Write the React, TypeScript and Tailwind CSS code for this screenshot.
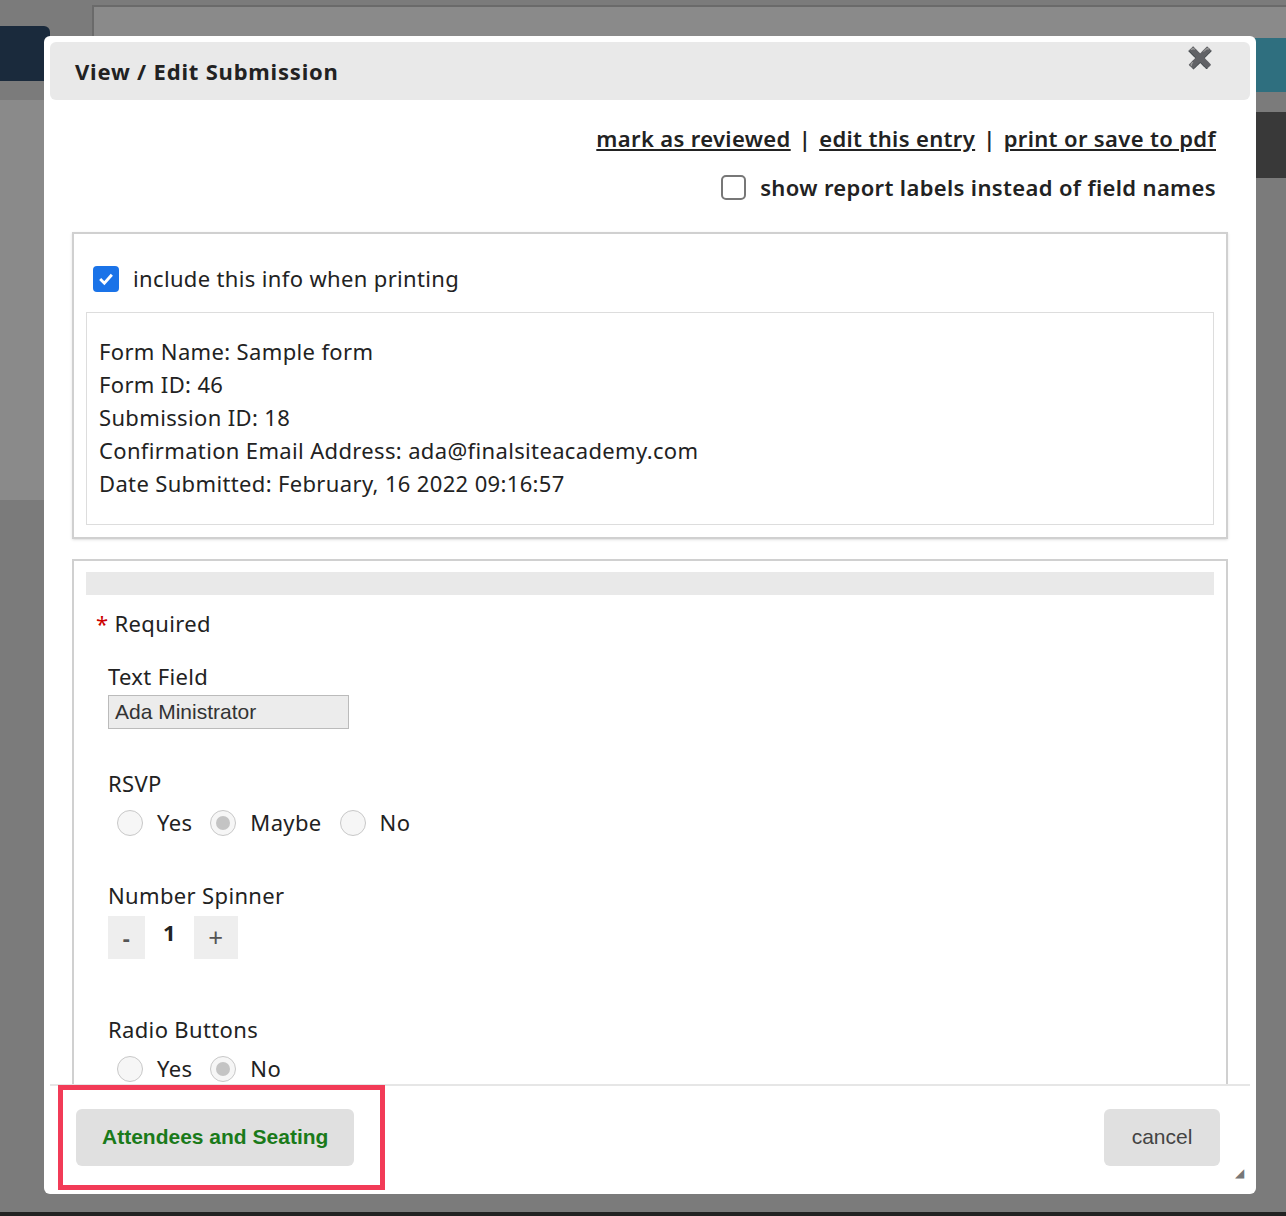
import React from "react";

function Radio({ checked }: { checked?: boolean }) {
  return (
    <span className="inline-flex h-[26px] w-[26px] items-center justify-center rounded-full border border-[#c8c8c8] bg-[#f6f6f6]">
      {checked && <span className="h-[14px] w-[14px] rounded-full bg-[#c4c4c4]" />}
    </span>
  );
}

export default function App() {
  return (
    <div className="relative h-[1216px] w-[1286px] overflow-hidden bg-[#7b7b7b] font-['Open_Sans',sans-serif] tracking-[0.35px] text-[#222]">
      {/* backdrop page */}
      <div className="absolute left-0 top-[26px] h-[55px] w-[50px] rounded-r-md bg-[#1a2a3c]" />
      <div className="absolute left-[92px] top-[5px] h-[40px] w-[1194px] border-l-2 border-t-2 border-[#6a6a6a] bg-[#8a8a8a]" />
      <div className="absolute right-0 top-[38px] h-[54px] w-[40px] rounded-l-md bg-[#2f6f7f]" />
      <div className="absolute right-0 top-[112px] h-[66px] w-[40px] bg-[#393939]" />
      <div className="absolute left-0 top-[100px] h-[400px] w-[44px] bg-[#8a8a8a]" />
      <div className="absolute bottom-0 left-0 h-[4px] w-full bg-[#222]" />

      {/* modal */}
      <div className="absolute left-[44px] top-[36px] flex h-[1158px] w-[1212px] flex-col rounded-md bg-white p-[6px]">
        <div className="relative flex h-[58px] items-center rounded-md bg-[#e9e9e9] px-[25px]">
          <span className="text-[22px] font-bold tracking-[0.8px]">View / Edit Submission</span>
          <span className="absolute right-[36px] top-[0px] text-[21px] font-bold text-[#888]">✖</span>
        </div>

        <div className="flex flex-1 flex-col overflow-hidden px-[22px]">
          <div className="mt-[22px] flex justify-end gap-[8px] pr-[12px] text-[22px] font-semibold">
            <span className="underline">mark as reviewed</span>|
            <span className="underline">edit this entry</span>|
            <span className="underline">print or save to pdf</span>
          </div>
          <div className="mt-[16px] flex items-center justify-end gap-[14px] pr-[12px] text-[22px] font-semibold">
            <span className="h-[25px] w-[25px] rounded-[5px] border-2 border-[#777]" />
            show report labels instead of field names
          </div>

          <div className="mt-[28px] border-2 border-[#d0d0d0] px-[12px] pb-[12px] shadow-sm">
            <div className="mt-[28px] flex items-center gap-[14px] pl-[7px] text-[22px]">
              <span className="flex h-[26px] w-[26px] items-center justify-center rounded-[4px] bg-[#1a73e8] text-white">
                <svg viewBox="0 0 24 24" className="h-[20px] w-[20px]" fill="none" stroke="white" strokeWidth="3.5"><path d="M5 12l5 5 9-10" /></svg>
              </span>
              include this info when printing
            </div>
            <div className="mt-[17px] border border-[#ddd] px-[12px] pb-[24px] pt-[22px] text-[22px] leading-[33px]">
              <div>Form Name: Sample form</div>
              <div>Form ID: 46</div>
              <div>Submission ID: 18</div>
              <div>Confirmation Email Address: ada@finalsiteacademy.com</div>
              <div>Date Submitted: February, 16 2022 09:16:57</div>
            </div>
          </div>

          <div className="mt-[20px] flex-1 border-2 border-b-0 border-[#d0d0d0] px-[12px]">
            <div className="mt-[11px] h-[23px] bg-[#e9e9e9]" />
            <div className="mt-[12px] pl-[10px] text-[22px]"><span className="text-[#c00]">*</span> Required</div>
            <div className="pl-[22px]">
              <div className="mt-[20px] text-[22px]">Text Field</div>
              <div className="mt-[2px] h-[34px] w-[241px] border border-[#bbb] bg-[#ececec] px-[6px] font-[Liberation_Sans,Arial,sans-serif] text-[21px] leading-[32px] tracking-normal text-[#333]">Ada Ministrator</div>

              <div className="mt-[38px] text-[22px]">RSVP</div>
              <div className="mt-[6px] flex items-center pl-[9px] text-[22px]">
                <Radio /><span className="ml-[14px] mr-[18px]">Yes</span>
                <Radio checked /><span className="ml-[14px] mr-[18px]">Maybe</span>
                <Radio /><span className="ml-[14px]">No</span>
              </div>

              <div className="mt-[40px] text-[22px]">Number Spinner</div>
              <div className="mt-[4px] flex items-start gap-[18px]">
                <span className="flex h-[43px] w-[37px] items-center justify-center bg-[#eee] text-[22px] font-bold text-[#555]">-</span>
                <span className="text-[22px] font-bold">1</span>
                <span className="flex h-[43px] w-[44px] items-center justify-center bg-[#eee] text-[26px] text-[#555]">+</span>
              </div>

              <div className="mt-[54px] text-[22px]">Radio Buttons</div>
              <div className="mt-[6px] flex items-center pl-[9px] text-[22px]">
                <Radio /><span className="ml-[14px] mr-[18px]">Yes</span>
                <Radio checked /><span className="ml-[14px]">No</span>
              </div>
            </div>
          </div>
        </div>

        <div className="relative flex h-[104px] items-center justify-between border-t-2 border-[#e6e6e6] px-[26px]">
          <button className="h-[57px] rounded-[6px] bg-[#e0e0e0] px-[26px] font-[Liberation_Sans,Arial,sans-serif] text-[21px] font-bold tracking-normal text-[#1a7a1a]">Attendees and Seating</button>
          <button className="mr-[4px] h-[57px] w-[116px] rounded-[6px] bg-[#e0e0e0] font-[Liberation_Sans,Arial,sans-serif] text-[21px] tracking-normal text-[#444]">cancel</button>
          <span className="absolute bottom-[6px] right-[6px] text-[12px] text-[#777]">◢</span>
        </div>
      </div>

      {/* highlight */}
      <div className="absolute left-[58px] top-[1085px] h-[105px] w-[327px] border-[5px] border-[#f23b57]" />
    </div>
  );
}
